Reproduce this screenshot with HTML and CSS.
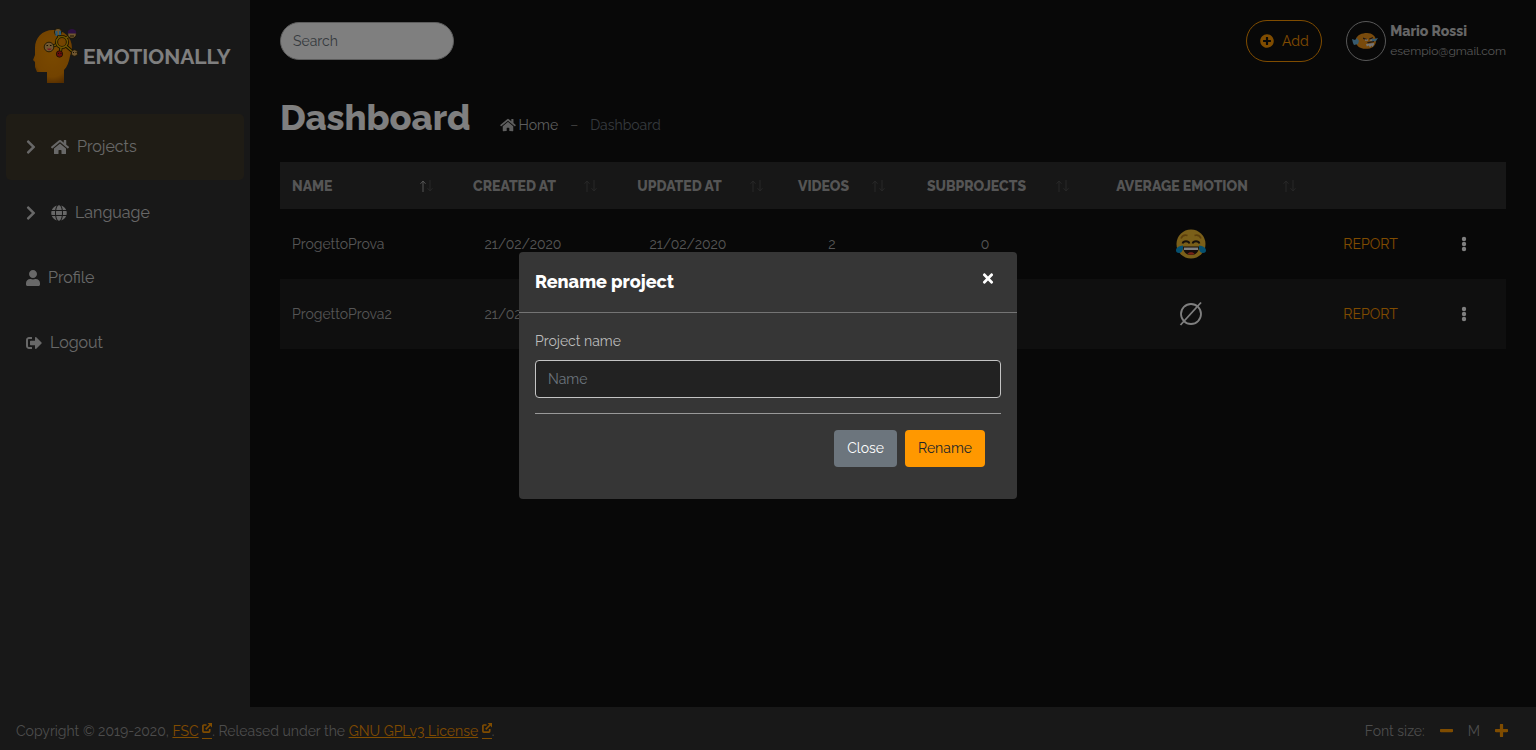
FILE: index.html
```html
<!DOCTYPE html>
<html lang="en">
<head>
<meta charset="utf-8">
<meta name="viewport" content="width=device-width, initial-scale=1">
<title>Dashboard - Emotionally</title>
<link rel="stylesheet" href="styles.css">
</head>
<body>
<svg class="sprite" aria-hidden="true">
  <symbol id="chevron" viewBox="0 0 320 512"><path d="M285.476 272.971L91.132 467.314c-9.373 9.373-24.569 9.373-33.941 0l-22.667-22.667c-9.357-9.357-9.375-24.522-.04-33.901L188.505 256 34.484 101.255c-9.335-9.379-9.317-24.544.04-33.901l22.667-22.667c9.373-9.373 24.569-9.373 33.941 0L285.475 239.03c9.373 9.372 9.373 24.568.001 33.941z"/></symbol>
  <symbol id="home" viewBox="0 0 576 512"><path d="M280.37 148.26L96 300.11V464a16 16 0 0 0 16 16l112.06-.29a16 16 0 0 0 15.92-16V368a16 16 0 0 1 16-16h64a16 16 0 0 1 16 16v95.64a16 16 0 0 0 16 16.05L464 480a16 16 0 0 0 16-16V300L295.67 148.26a12.19 12.19 0 0 0-15.3 0zM571.6 251.47L488 182.56V44.05a12 12 0 0 0-12-12h-56a12 12 0 0 0-12 12v72.61L318.47 43a48 48 0 0 0-61 0L4.34 251.47a12 12 0 0 0-1.6 16.9l25.5 31A12 12 0 0 0 45.15 301l235.22-193.74a12.19 12.19 0 0 1 15.3 0L530.9 301a12 12 0 0 0 16.9-1.6l25.5-31a12 12 0 0 0-1.7-16.93z"/></symbol>
  <symbol id="globe" viewBox="0 0 496 512"><path d="M336.5 160C322 70.7 287.8 8 248 8s-74 62.7-88.5 152h177zM152 256c0 22.2 1.2 43.5 3.3 64h185.3c2.1-20.5 3.3-41.8 3.3-64s-1.2-43.5-3.3-64H155.3c-2.1 20.5-3.3 41.8-3.3 64zm324.7-96c-28.6-67.9-86.5-120.4-158-141.6 24.4 33.8 41.2 84.7 50 141.6h108zM177.2 18.4C105.8 39.6 47.8 92.1 19.3 160h108c8.7-56.9 25.5-107.8 49.9-141.6zM487.4 192H372.7c2.1 21 3.3 42.5 3.3 64s-1.2 43-3.3 64h114.6c5.5-20.5 8.6-41.8 8.6-64s-3.1-43.5-8.5-64zM120 256c0-21.5 1.2-43 3.3-64H8.6C3.2 212.5 0 233.8 0 256s3.2 43.5 8.6 64h114.6c-2-21-3.2-42.5-3.2-64zm39.5 96c14.5 89.3 48.7 152 88.5 152s74-62.7 88.5-152h-177zm159.3 141.6c71.4-21.2 129.4-73.7 158-141.6h-108c-8.8 56.9-25.6 107.8-50 141.6zM19.3 352c28.6 67.9 86.5 120.4 158 141.6-24.4-33.8-41.2-84.7-50-141.6h-108z"/></symbol>
  <symbol id="user" viewBox="0 0 448 512"><path d="M224 256c70.7 0 128-57.3 128-128S294.7 0 224 0 96 57.3 96 128s57.3 128 128 128zm89.6 32h-16.7c-22.2 10.2-46.9 16-72.9 16s-50.6-5.8-72.9-16h-16.7C60.2 288 0 348.2 0 422.4V464c0 26.5 21.5 48 48 48h352c26.5 0 48-21.5 48-48v-41.6c0-74.2-60.2-134.4-134.4-134.4z"/></symbol>
  <symbol id="logout" viewBox="0 0 512 512"><path d="M497 273L329 441c-15 15-41 4.5-41-17v-96H152c-13.3 0-24-10.7-24-24v-96c0-13.3 10.7-24 24-24h136V88c0-21.4 25.9-32 41-17l168 168c9.3 9.4 9.3 24.6 0 34zM192 436v-40c0-6.6-5.4-12-12-12H96c-17.7 0-32-14.3-32-32V160c0-17.7 14.3-32 32-32h84c6.6 0 12-5.4 12-12V76c0-6.600-5.400-12-12-12H96c-53 0-96 43-96 96v192c0 53 43 96 96 96h84c6.600 0 12-5.400 12-12z"/></symbol>
  <symbol id="plus-circle" viewBox="0 0 512 512"><path d="M256 8C119 8 8 119 8 256s111 248 248 248 248-111 248-248S393 8 256 8zm144 276c0 6.600-5.400 12-12 12h-92v92c0 6.600-5.400 12-12 12h-56c-6.600 0-12-5.400-12-12v-92h-92c-6.600 0-12-5.400-12-12v-56c0-6.600 5.400-12 12-12h92v-92c0-6.600 5.400-12 12-12h56c6.600 0 12 5.400 12 12v92h92c6.600 0 12 5.400 12 12v56z"/></symbol>
  <symbol id="times" viewBox="0 0 352 512"><path d="M242.72 256l100.07-100.07c12.28-12.28 12.28-32.19 0-44.48l-22.24-22.24c-12.28-12.28-32.19-12.28-44.48 0L176 189.28 75.93 89.21c-12.28-12.28-32.19-12.28-44.48 0L9.21 111.45c-12.28 12.28-12.28 32.19 0 44.48L109.28 256 9.21 356.07c-12.28 12.28-12.28 32.19 0 44.48l22.24 22.24c12.28 12.28 32.2 12.28 44.48 0L176 322.72l100.07 100.07c12.28 12.28 32.2 12.28 44.48 0l22.24-22.24c12.28-12.28 12.28-32.19 0-44.48L242.72 256z"/></symbol>
  <symbol id="dots" viewBox="0 0 6 16"><circle cx="3" cy="3" r="2.200"/><circle cx="3" cy="8" r="2.200"/><circle cx="3" cy="13" r="2.200"/></symbol>
  <symbol id="external" viewBox="0 0 10 10"><path d="M4.500 2H1.800a.9.9 0 0 0-.9.9v5.300a.9.9 0 0 0 .9.9h5a.9.9 0 0 0 .9-.9V6M3.700 6.300 8 2" fill="none" stroke="currentColor" stroke-width="1.700"/><path d="M5.600 0H10v4.400z"/></symbol>
  <symbol id="sort-up" viewBox="0 0 6 12"><path d="M3 12V1M.5 3.800 3 1l2.500 2.800" fill="none" stroke="currentColor"/></symbol>
  <symbol id="sort-down" viewBox="0 0 6 12"><path d="M3 0v11M.5 8.200 3 11l2.500-2.800" fill="none" stroke="currentColor"/></symbol>
</svg>

<div class="page">
  <aside class="sidebar">
    <a class="brand" href="#">
      <svg class="brand-mark" viewBox="0 0 48 58" aria-hidden="true">
        <defs><radialGradient id="skin" cx="50%" cy="42%" r="62%"><stop offset="0" stop-color="#f59400"/><stop offset=".75" stop-color="#e68600"/><stop offset="1" stop-color="#a85a00"/></radialGradient></defs>
        <path fill="url(#skin)" d="M20 3C9 3 2 11 2 21v7L0 33l2 2v5l2 5h10v11h17V43c3-3 5-8 6-14 1-3 2-6 2-8 0-11-8-18-19-18z"/>
        <g fill="none" stroke="#2b2200" stroke-width="3.200"><circle cx="29" cy="15" r="5.500"/><path d="M23 18l-7 2M28 21l-1 6M33 19l7 6M33 11l5-3M26 10l-1-4"/></g>
        <g fill="none" stroke="#e0aa00" stroke-width="1.500"><circle cx="29" cy="15" r="5.500"/><path d="M23 18l-7 2M28 21l-1 6M33 19l7 6M33 11l5-3M26 10l-1-4"/></g>
        <g stroke="#2b2200" stroke-width=".8">
          <circle cx="25" cy="5" r="3.600" fill="#e0ad60"/><circle cx="39" cy="7" r="4.300" fill="#e0ad60"/>
          <circle cx="16" cy="20" r="4.800" fill="#e0ad60"/><circle cx="41.500" cy="26" r="3.200" fill="#e0ad60"/>
          <circle cx="26.500" cy="27" r="3.200" fill="#c81818"/>
        </g>
        <path fill="#4eb5f0" d="M22.500 4h2v5h-2zM26 4h2v4h-2z"/><path fill="#5a2285" d="M34.500 6.500a4.500 4.500 0 0 1 9 0z"/>
        <path fill="#e8364a" d="M14 21.500h4.500a2.300 2.300 0 0 1-4.500 0z"/>
        <path fill="#2b2200" d="M13.500 18h1.500v1h-1.500zM17 18h1.500v1H17zM25 26h1v1h-1zM27.500 26h1v1h-1zM40 25h1v1h-1zM42.500 25h1v1h-1zM37 8.500h4v1h-4z"/>
      </svg>
      <span class="brand-name">EMOTIONALLY</span>
    </a>
    <nav class="nav">
      <a class="nav-item nav-item-active" href="#"><svg class="icon icon-chevron"><use href="#chevron"/></svg><svg class="icon icon-home"><use href="#home"/></svg>Projects</a>
      <a class="nav-item" href="#"><svg class="icon icon-chevron"><use href="#chevron"/></svg><svg class="icon"><use href="#globe"/></svg>Language</a>
      <a class="nav-item" href="#"><svg class="icon icon-user"><use href="#user"/></svg>Profile</a>
      <a class="nav-item" href="#"><svg class="icon"><use href="#logout"/></svg>Logout</a>
    </nav>
  </aside>

  <main class="main">
    <header class="topbar">
      <input class="search" type="search" placeholder="Search" aria-label="Search">
      <div class="account">
        <button class="add" type="button"><svg class="icon-add"><use href="#plus-circle"/></svg>Add</button>
        <a class="user" href="#">
          <svg class="avatar" viewBox="0 0 40 40" aria-hidden="true">
            <circle cx="20" cy="20" r="19.500" fill="none" stroke="#b0b0b0"/>
            <path fill="#f09418" d="M10 18c1-4 6-6 11-6 5 0 9 3 9 8 0 2-1 4-3 6-3 2-8 2.500-12 1-3-1-6-4-5-9z"/>
            <path fill="#6fb5dc" d="M6 18l3 1 2-2 2 3-1 3-4 1-1-2zM25 17l3 1 4-1-2 3-4 1z"/>
            <path fill="#3f3026" d="M17 16.500l4 1.500v1l-4-1zM23 17.500l4-1.500v1l-3 2zM21 21l7-1v1l-6 1.500z"/>
            <path fill="#e8e8e8" d="M19 18.500h3v1.200h-3zM24 18.500h2v1.200h-2zM20 23l8-1v1.500l-1.500 2.500-1-1.500-1.500 2-1.200-2-2 1z"/>
          </svg>
          <span class="user-text"><strong class="user-name">Mario Rossi</strong><span class="user-mail">esempio@gmail.com</span></span>
        </a>
      </div>
    </header>

    <div class="heading">
      <h1 class="title">Dashboard</h1>
      <nav class="crumbs" aria-label="Breadcrumb">
        <a class="crumb-home" href="#"><svg class="icon-crumb"><use href="#home"/></svg>Home</a><span>–</span><span class="crumb-current">Dashboard</span>
      </nav>
    </div>

    <table class="projects">
      <colgroup><col class="col-name"><col class="col-created"><col class="col-updated"><col class="col-videos"><col class="col-sub"><col class="col-emotion"><col class="col-report"><col class="col-menu"></colgroup>
      <thead>
        <tr>
          <th class="cell-name"><div class="head"><span class="head-text">NAME</span><span class="sort sort-asc"><svg><use href="#sort-up"/></svg><svg><use href="#sort-down"/></svg></span></div></th>
          <th><div class="head"><span class="head-text">CREATED AT</span><span class="sort"><svg><use href="#sort-up"/></svg><svg><use href="#sort-down"/></svg></span></div></th>
          <th><div class="head"><span class="head-text">UPDATED AT</span><span class="sort"><svg><use href="#sort-up"/></svg><svg><use href="#sort-down"/></svg></span></div></th>
          <th><div class="head"><span class="head-text">VIDEOS</span><span class="sort"><svg><use href="#sort-up"/></svg><svg><use href="#sort-down"/></svg></span></div></th>
          <th><div class="head"><span class="head-text">SUBPROJECTS</span><span class="sort"><svg><use href="#sort-up"/></svg><svg><use href="#sort-down"/></svg></span></div></th>
          <th><div class="head"><span class="head-text">AVERAGE EMOTION</span><span class="sort"><svg><use href="#sort-up"/></svg><svg><use href="#sort-down"/></svg></span></div></th>
          <th></th>
          <th></th>
        </tr>
      </thead>
      <tbody>
        <tr>
          <td class="cell-name">ProgettoProva</td><td>21/02/2020</td><td>21/02/2020</td><td>2</td><td>0</td>
          <td>
            <svg class="emotion" viewBox="0 0 32 32" role="img" aria-label="Joy">
              <circle cx="16" cy="16" r="14.500" fill="#f5be32"/>
              <path d="M6 10.500c1-2.500 3.500-4 6.500-3M26 10.500c-1-2.500-3.500-4-6.500-3" fill="none" stroke="#b87f18" stroke-width="1.600"/>
              <path d="M7.500 15.500c1-3 6-3 7 0M17.500 15.500c1-3 6-3 7 0" fill="none" stroke="#2e2218" stroke-width="1.800"/>
              <path d="M8 18.500h16c0 5-3 8.500-8 8.500s-8-3.500-8-8.500z" fill="#2b1a14"/><path d="M9 19.500h14v2.500H9z" fill="#fff"/><path d="M12.500 26c1-2.500 6-2.500 7 0-2 1-5 1-7 0z" fill="#f0452a"/>
              <path d="M1 22.500c0-3 3-4.500 7-5 .5 4-1 7.500-4 7.500-2 0-3-1-3-2.500zM31 22.500c0-3-3-4.500-7-5-.5 4 1 7.500 4 7.500 2 0 3-1 3-2.500z" fill="#0aa0e0"/>
            </svg>
          </td>
          <td><a class="report" href="#">REPORT</a></td>
          <td class="cell-menu"><button class="menu" type="button" aria-label="Project menu"><svg class="icon-dots"><use href="#dots"/></svg></button></td>
        </tr>
        <tr>
          <td class="cell-name">ProgettoProva2</td><td>21/02/2020</td><td>21/02/2020</td><td>0</td><td>0</td>
          <td>
            <svg class="emotion" viewBox="0 0 32 32" role="img" aria-label="No emotion"><g fill="none" stroke="#fff" stroke-width="1.800"><circle cx="16" cy="16" r="10"/><path d="M5.500 27l20.500-22.500"/></g></svg>
          </td>
          <td><a class="report" href="#">REPORT</a></td>
          <td class="cell-menu"><button class="menu" type="button" aria-label="Project menu"><svg class="icon-dots"><use href="#dots"/></svg></button></td>
        </tr>
      </tbody>
    </table>
  </main>

  <footer class="footer">
    <p class="legal">Copyright © 2019-2020, <a class="link" href="#"><span class="link-text">FSC</span> <svg class="icon-ext"><use href="#external"/></svg></a>. Released under the <a class="link" href="#"><span class="link-text">GNU GPLv3 License</span> <svg class="icon-ext"><use href="#external"/></svg></a>.</p>
    <div class="font-size">
      <span>Font size:</span>
      <button class="step" type="button" aria-label="Smaller"><svg class="icon-step" viewBox="0 0 12 12"><path d="M1 6h10"/></svg></button>
      <span>M</span>
      <button class="step" type="button" aria-label="Larger"><svg class="icon-step" viewBox="0 0 12 12"><path d="M1 6h10M6 1v10"/></svg></button>
    </div>
  </footer>
</div>

<div class="overlay">
  <form class="modal" role="dialog" aria-modal="true" aria-labelledby="modal-title">
    <div class="modal-head">
      <h2 class="modal-title" id="modal-title">Rename project</h2>
      <button class="modal-x" type="button" aria-label="Close dialog"><svg class="icon-x"><use href="#times"/></svg></button>
    </div>
    <div class="modal-body">
      <label class="label" for="project-name">Project name</label>
      <input class="field" id="project-name" type="text" placeholder="Name">
      <div class="actions">
        <button class="btn btn-close" type="button">Close</button>
        <button class="btn btn-rename" type="submit">Rename</button>
      </div>
    </div>
  </form>
</div>
</body>
</html>
```

FILE: styles.css
```css
* { box-sizing: border-box; }

body {
  margin: 0;
  background: #111;
  color: #ababab;
  font: 14px/22px Raleway, Lato, sans-serif;
}

a { color: inherit; text-decoration: none; }
button, input { font: inherit; }
button { padding: 0; border: 0; background: none; color: inherit; cursor: pointer; }
svg { fill: currentColor; flex: none; }
.sprite { display: none; }

.page {
  display: grid;
  grid-template-columns: 250px 1fr;
  grid-template-rows: 1fr auto;
  min-height: 100vh;
}

/* Sidebar */
.sidebar { background: #303030; }
.brand {
  display: flex;
  align-items: center;
  height: 114px;
  padding: 0 0 2px 33px;
  color: #fff;
}
.brand-mark { width: 48px; height: 58px; }
.brand-name { margin-left: 2px; padding-top: 2px; font-size: 21px; font-weight: 700; }
.nav { padding: 0 6px; }
.nav-item {
  display: flex;
  align-items: center;
  gap: 8px;
  height: 65px;
  padding-left: 20px;
  border-radius: 5px;
  color: #d0d0d0;
  font-size: 16px;
}
.nav-item-active { height: 66px; background: #3f382a; }
.icon { width: 16px; height: 16px; }
.icon-chevron { width: 10px; margin-right: 7px; }
.icon-home { width: 18px; }
.icon-user { width: 14px; }

/* Main column */
.main { min-width: 0; padding: 20px 30px; }
.topbar { display: flex; align-items: center; justify-content: space-between; height: 42px; }
.search {
  width: 174px;
  height: 38px;
  padding: 0 12px;
  border: 1px solid #b8b8b8;
  border-radius: 20px;
  background: #fff;
}
.search::placeholder, .field::placeholder { color: #6c757d; opacity: 1; }
.account { display: flex; align-items: center; gap: 24px; }
.add {
  display: flex;
  align-items: center;
  justify-content: center;
  gap: 8px;
  width: 76px;
  height: 42px;
  border: 1px solid #ff9800;
  border-radius: 21px;
  color: #ff9800;
}
.icon-add { width: 14px; height: 14px; }
.user { display: flex; align-items: center; gap: 4px; }
.avatar { width: 40px; height: 40px; }
.user-text { display: flex; flex-direction: column; line-height: 20px; }
.user-name { color: #ccc; font-weight: 800; }
.user-mail { font-size: 12px; }

.heading { display: flex; align-items: baseline; gap: 29px; padding: 28px 0 17px; }
.title { margin: 0; color: #fff; font-size: 36px; line-height: 55px; font-weight: 800; }
.crumbs { display: flex; align-items: baseline; gap: 12px; color: #777; }
.crumb-home { color: #bcbcbc; }
.icon-crumb { width: 16px; height: 14px; margin-right: 3px; vertical-align: -2px; }
.crumb-current { color: #6c757d; }

/* Projects table */
.projects { width: 100%; table-layout: fixed; border-collapse: collapse; text-align: center; }
.col-name { width: 161px; }
.col-created { width: 164px; }
.col-updated { width: 166px; }
.col-videos { width: 122px; }
.col-sub { width: 184px; }
.col-emotion { width: 227px; }
.col-report { width: 133px; }
.col-menu { width: 69px; }
.projects thead tr { height: 47px; background: #2e2e2e; }
.projects tbody tr { height: 70px; }
.projects tbody tr:nth-child(even) { background: #1e1e1e; }
.projects th, .projects td { padding: 0 12px; white-space: nowrap; }
.projects th { padding-right: 8px; font-weight: 800; }
.head { display: flex; align-items: center; gap: 8px; }
.head-text { flex: 1; }
.projects .cell-name { text-align: left; }
.sort { display: flex; gap: 1px; color: #505050; }
.sort svg { width: 6px; height: 12px; }
.sort-asc svg:first-child { color: #aaa; }
.emotion { display: block; width: 32px; height: 32px; margin: 0 auto; }
.report { color: #ff9800; }
.projects .cell-menu { padding-right: 27px; }
.menu { display: block; width: 16px; height: 24px; margin: 0 auto; color: #fff; }
.icon-dots { display: block; width: 6px; height: 16px; margin: 0 auto; }

/* Footer */
.footer {
  grid-column: 1 / -1;
  display: flex;
  align-items: center;
  justify-content: space-between;
  height: 43px;
  padding: 4px 28px 0 16px;
  background: #303030;
  color: #999;
}
.legal { margin: 0; }
.link { color: #ff9800; }
.link-text { text-decoration: underline; }
.icon-ext {
  width: 10px;
  height: 16px;
  padding-bottom: 5px;
  border-bottom: 1px solid;
  vertical-align: -3px;
}
.font-size { display: flex; align-items: center; gap: 15px; }
.step { display: flex; color: #ff9800; }
.icon-step { width: 13px; height: 13px; stroke: currentColor; stroke-width: 3; stroke-linecap: round; }

/* Rename dialog */
.overlay {
  position: fixed;
  inset: 0;
  display: flex;
  align-items: center;
  justify-content: center;
  background: rgba(0, 0, 0, .5);
}
.modal { width: 498px; max-width: 100%; border-radius: 4px; background: #363636; color: #bcbcbc; }
.modal-head {
  display: flex;
  justify-content: space-between;
  padding: 16px 22px 16px 16px;
  border-bottom: 1px solid #747474;
  color: #fff;
}
.modal-title { margin: 0; font-size: 18px; line-height: 28px; font-weight: 800; }
.modal-x { display: flex; align-items: center; height: 22px; }
.icon-x { width: 14px; height: 15px; }
.modal-body { padding: 17px 16px 32px; }
.label { display: block; margin-bottom: 8px; }
.field {
  display: block;
  width: 100%;
  height: 38px;
  padding: 0 12px;
  border: 1px solid #c4c4c4;
  border-radius: 4px;
  background: #222;
  color: #fff;
}
.actions {
  display: flex;
  justify-content: flex-end;
  gap: 8px;
  margin-top: 15px;
  padding: 16px 16px 0 0;
  border-top: 1px solid #999;
}
.btn { height: 37px; padding: 0 13px; border-radius: 4px; }
.btn-close { background: #6c757d; color: #fff; }
.btn-rename { background: #ff9800; color: #212529; }
```
